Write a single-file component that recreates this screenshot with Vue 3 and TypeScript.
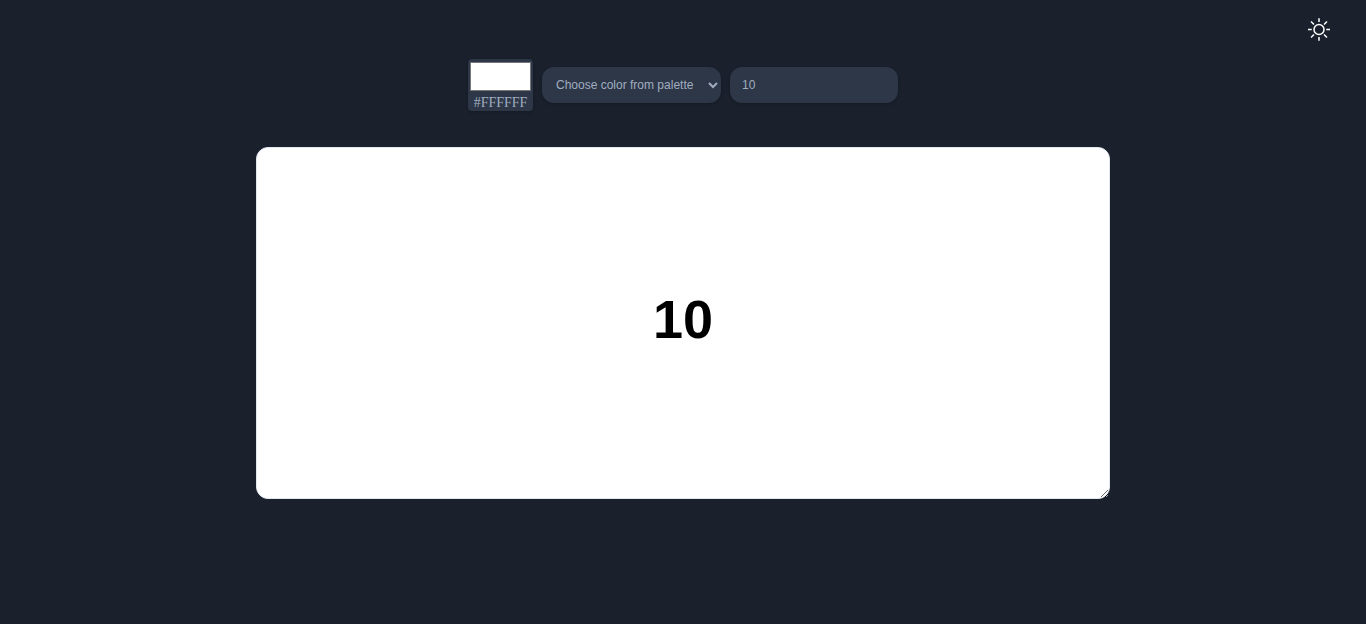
<script setup lang="ts">
import { computed, ref } from 'vue'

const color = ref('#ffffff')
const choice = ref('')
const label = ref('10')
const dark = ref(true)
const palette = ['#ffffff', '#f56565', '#48bb78', '#4299e1']
const colorName = computed(() => color.value.toUpperCase())

function pick() {
  if (choice.value) color.value = choice.value
}
</script>

<template>
  <div class="page" :class="{ light: !dark }">
    <header class="top">
      <button class="theme" type="button" aria-label="Toggle theme" @click="dark = !dark">
        <svg viewBox="0 0 24 24" width="24" height="24" fill="none" stroke="currentColor" stroke-width="1.5">
          <circle cx="12" cy="12.5" r="5" />
          <path d="M12 1.3v3.7M12 20v3.7M1 12.5h3.7M19.3 12.5h3.7M4 4.5l3 3M17 17.5l3 3M20 4.5l-3 3M7 17.5l-3 3" />
        </svg>
      </button>
    </header>
    <main>
      <form class="controls" @submit.prevent>
        <label class="swatch">
          <input v-model="color" type="color" />
          <span>{{ colorName }}</span>
        </label>
        <select v-model="choice" class="field select" aria-label="Palette color" @change="pick">
          <option value="">Choose color from palette</option>
          <option v-for="c in palette" :key="c" :value="c">{{ c }}</option>
        </select>
        <input v-model="label" class="field text" type="text" aria-label="Text" />
      </form>
      <section class="preview" :style="{ backgroundColor: color }">
        <span>{{ label }}</span>
      </section>
    </main>
  </div>
</template>

<style>
body {
  background: #1a202c;
}
</style>

<style scoped>
.page {
  box-sizing: border-box;
  min-height: 100vh;
  background: #1a202c;
  color: #a0aec0;
  font-family: "Liberation Sans", Arial, sans-serif;
}
.page.light {
  background: #edf2f7;
  color: #2d3748;
}
.top {
  display: flex;
  justify-content: flex-end;
  padding: 17px 35px 0 0;
}
.theme {
  display: flex;
  padding: 0;
  border: 0;
  background: none;
  color: #fff;
  cursor: pointer;
}
.light .theme {
  color: #1a202c;
}
.controls {
  display: flex;
  justify-content: center;
  align-items: center;
  gap: 9px;
  margin-top: 18px;
}
.swatch {
  box-sizing: border-box;
  display: flex;
  flex-direction: column;
  align-items: center;
  width: 65px;
  height: 52px;
  padding-top: 3px;
  border-radius: 4px;
  background: #2d3748;
  box-shadow: 0 1px 3px rgba(0, 0, 0, 0.2);
  font: 14px/24px "Liberation Serif", "Times New Roman", serif;
  color: #a0aec0;
}
.swatch input {
  appearance: none;
  flex: none;
  box-sizing: border-box;
  width: 61px;
  height: 29px;
  padding: 0;
  border: 0;
  background: none;
}
.swatch input::-webkit-color-swatch-wrapper {
  padding: 0;
}
.swatch input::-webkit-color-swatch {
  border: 1px solid #777;
}
.field {
  box-sizing: border-box;
  height: 36px;
  margin: 0;
  border: 0;
  border-radius: 12px;
  background-color: #2d3748;
  color: #a0aec0;
  box-shadow: 0 1px 3px rgba(0, 0, 0, 0.2);
  font: 12px "Liberation Sans", Arial, sans-serif;
}
.select {
  width: 179px;
  padding: 0 0 0 10px;
}
.text {
  width: 168px;
  padding: 0 12px;
}
.preview {
  box-sizing: border-box;
  display: flex;
  align-items: center;
  justify-content: center;
  width: 62.5%;
  height: 352px;
  margin: 36px auto 0;
  padding-bottom: 8px;
  border: 1px solid #e2e8f0;
  border-radius: 12px;
  overflow: hidden;
  resize: both;
  color: #000;
  font-size: 54px;
  font-weight: 700;
  line-height: 64px;
}
</style>
